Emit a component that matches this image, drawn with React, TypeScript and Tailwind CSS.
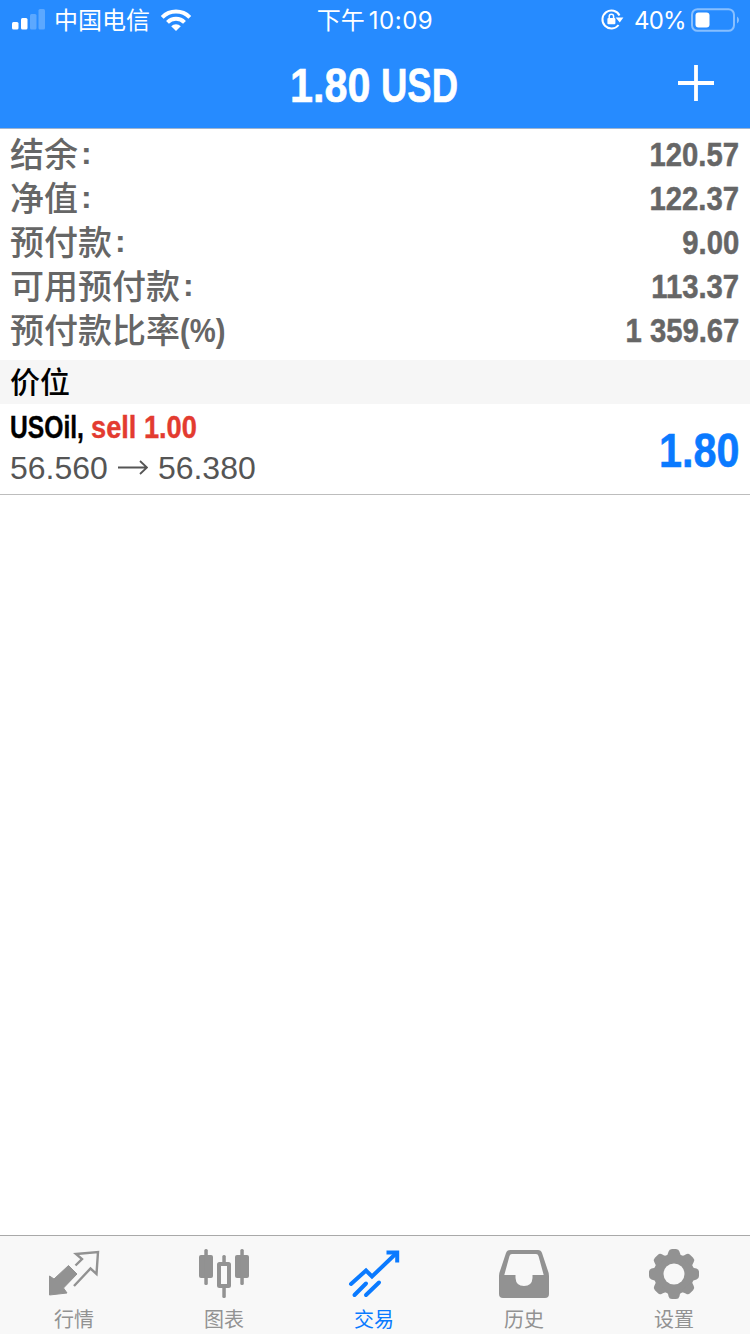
import React from 'react';

interface SummaryRow {
  label: string;
  suffix: string;
  value: string;
}

const summary: SummaryRow[] = [
  { label: "结余", suffix: ":", value: "120.57" },
  { label: "净值", suffix: ":", value: "122.37" },
  { label: "预付款", suffix: ":", value: "9.00" },
  { label: "可用预付款", suffix: ":", value: "113.37" },
  { label: "预付款比率", suffix: "(%)", value: "1 359.67" }
];

const QuotesIcon = () => (
  <svg width="52" height="52" viewBox="0 0 52 52">
    <path d="M1.5 27L6 30L20.5 16.5L29 25L15.5 39L19 44L1.5 46Z" fill="#929292" stroke="#929292" strokeWidth="1" strokeLinejoin="round" />
    <path d="M27.5 16.5L34 10L28 5L50 3L48.5 25L42.5 19.5L26 37" fill="none" stroke="#929292" strokeWidth="2.4" />
  </svg>
);

const ChartIcon = () => (
  <svg width="52" height="52" viewBox="0 0 52 52" fill="#929292">
    <rect x="1" y="6" width="14" height="23" rx="2" />
    <rect x="6.3" y="0" width="3.5" height="36" rx="1.5" />
    <rect x="37" y="6" width="14" height="23" rx="2" />
    <rect x="42.3" y="0" width="3.5" height="36" rx="1.5" />
    <rect x="24.3" y="6" width="3.5" height="9" rx="1.5" />
    <rect x="24.3" y="37" width="3.5" height="12" rx="1.5" />
    <rect x="21" y="15" width="10" height="22" rx="0.5" fill="none" stroke="#929292" strokeWidth="4" />
  </svg>
);

const TradeIcon = () => (
  <svg width="52" height="52" viewBox="0 0 52 52" fill="none" stroke="#0a7aff" strokeWidth="4">
    <path d="M3 35L18 21.5L24 27.5L48 4.5" strokeLinecap="round" />
    <path d="M38.5 3.4H49.2V13.5" />
    <path d="M6.5 46L18 34.5M18 46L31 33.5" strokeLinecap="round" />
  </svg>
);

const HistoryIcon = () => (
  <svg width="52" height="52" viewBox="0 0 52 52">
    <path fillRule="evenodd" fill="#929292" d="M12 1H40Q43 1 44 4L50 22Q51 24 51 27V45Q51 49 47 49H5Q1 49 1 45V27Q1 24 2 22L8 4Q9 1 12 1ZM14 5Q12 5 11.5 7L6.3 26H17.5V29Q18 37 26 37Q34 37 34.5 29V26H45.7L40.5 7Q40 5 38 5Z" />
  </svg>
);

const SettingsIcon = () => (
  <svg width="52" height="52" viewBox="0 0 52 52">
    <g fill="#929292">
      <circle cx="26" cy="25" r="20" />
      {[0, 45, 90, 135, 180, 225, 270, 315].map((angle) => (
        <path key={angle} d="M17.5 7.5Q20 6 20.6 2.5Q21.2 0 24 0H28Q30.8 0 31.4 2.5Q32 6 34.5 7.5Z" transform={`rotate(${angle} 26 25)`} />
      ))}
    </g>
    <circle cx="26" cy="25" r="10.5" fill="#f8f8f8" />
  </svg>
);

const tabs = [
  { label: "行情", icon: <QuotesIcon />, active: false },
  { label: "图表", icon: <ChartIcon />, active: false },
  { label: "交易", icon: <TradeIcon />, active: true },
  { label: "历史", icon: <HistoryIcon />, active: false },
  { label: "设置", icon: <SettingsIcon />, active: false }
];

const StatusBar = () => (
  <div className="grid h-10 grid-cols-[1fr_auto_1fr] items-center text-white font-['Inter','Noto_Sans_CJK_SC',sans-serif] text-2xl">
    <div className="flex h-10 items-center pl-3">
      <svg width="34" height="22" viewBox="0 0 34 22" fill="#fff">
        <rect x="0" y="13" width="6.5" height="7.5" rx="1.5" />
        <rect x="9" y="9" width="6.5" height="11.5" rx="1.5" />
        <rect x="18" y="5" width="6.5" height="15.5" rx="1.5" opacity="0.25" />
        <rect x="26.5" y="0" width="6.5" height="20.5" rx="1.5" opacity="0.25" />
      </svg>
      <span className="ml-2 pt-0.5">中国电信</span>
      <svg className="ml-2.5" width="32" height="24" viewBox="0 0 32 24" fill="none" stroke="#fff" strokeWidth="4">
        <path d="M2.2 9.3A19.5 19.5 0 0 1 29.8 9.3" />
        <path d="M7.5 14.3A12 12 0 0 1 24.5 14.3" />
        <path d="M16 23L11.2 18.3A6.8 6.8 0 0 1 20.8 18.3Z" fill="#fff" stroke="none" />
      </svg>
    </div>
    <span className="pt-px">下午<span className="ml-1 tracking-[0.5px]">10:09</span></span>
    <div className="flex h-10 items-center justify-end pr-2.5">
      <svg className="mb-0.5" width="24" height="24" viewBox="0 0 24 24" fill="none" stroke="#fff" strokeWidth="2">
        <path d="M18.6 18A9 9 0 1 1 19.5 8.5" />
        <path d="M15.6 10.5H23.4L19.8 15.5Z" fill="#fff" stroke="none" />
        <rect x="7.4" y="11" width="8" height="6.3" rx="1" fill="#fff" stroke="none" />
        <path d="M9.2 11.5V9.5A2.2 2.2 0 0 1 13.6 9.5V11.5" strokeWidth="1.5" />
      </svg>
      <span className="ml-2.5 pt-px tracking-[-0.7px]">40%</span>
      <svg className="ml-[5px]" width="49" height="24" viewBox="0 0 49 24">
        <rect x="1" y="1.2" width="42" height="21.6" rx="5.5" fill="none" stroke="#fff" strokeOpacity="0.45" strokeWidth="2" />
        <rect x="4.5" y="4.5" width="14" height="15" rx="3" fill="#fff" />
        <path d="M46 8.5Q48 9.5 48 12Q48 14.5 46 15.5Z" fill="#fff" fillOpacity="0.45" />
      </svg>
    </div>
  </div>
);

export default function App() {
  return (
    <div className="flex h-[1334px] w-[750px] flex-col overflow-hidden bg-white font-['Liberation_Sans','Noto_Sans_CJK_SC',sans-serif]">
      <header className="h-[129px] border-b border-[#9fb4cf] bg-[#268bff]">
        <StatusBar />
        <div className="grid h-[88px] grid-cols-[1fr_auto_1fr] items-center text-white">
          <span />
          <h1 className="flex whitespace-nowrap pt-1 text-5xl font-bold leading-[84px] [-webkit-text-stroke:0.6px]">
            <span className="w-[91px] origin-left scale-x-[0.86]">1.80</span>
            <span className="w-[79px] origin-left scale-x-[0.76]">USD</span>
          </h1>
          <svg className="mr-[35px] justify-self-end" width="38" height="38" viewBox="0 0 38 38" stroke="#fff" strokeWidth="3.8">
            <path d="M1 18H37M19 0V36" />
          </svg>
        </div>
      </header>

      <section className="px-2.5 pt-[3px] pb-2 text-[34px] text-[#666666]">
        {summary.map((row) => (
          <div key={row.label} className="flex h-11 items-center justify-between leading-[44px]">
            <span className="flex h-11">
              <span className="-mt-px font-['Noto_Sans_CJK_SC',sans-serif] font-medium">{row.label}</span>
              {row.suffix === ":" ? (
                <span className="-mt-px ml-[3px] text-[32px] font-bold leading-[44px]">:</span>
              ) : (
                <span className="origin-left scale-x-[0.86] font-bold">{row.suffix}</span>
              )}
            </span>
            <span className="mr-px origin-right scale-x-[0.86] font-bold [-webkit-text-stroke:0.5px]">{row.value}</span>
          </div>
        ))}
      </section>

      <h2 className="h-11 bg-[#f6f6f6] px-2.5 pt-px text-3xl font-medium leading-[44px] text-black">价位</h2>

      <section className="flex h-[91px] items-center justify-between border-b border-[#bdbdbd] px-2.5">
        <div className="-mt-1">
          <div className="flex h-[42px] whitespace-nowrap text-[32px] font-bold leading-[42px] text-black [-webkit-text-stroke:0.4px]">
            <span className="w-[81px] origin-left scale-x-[0.77]">USOil,</span>
            <span className="origin-left scale-x-[0.85] text-[#e33b30]">sell 1.00</span>
          </div>
          <div className="flex h-10 items-center text-[32px] leading-10 text-[#555555]">
            <span>56.560</span>
            <svg className="mx-2.5" width="30" height="16" viewBox="0 0 30 16" fill="none" stroke="#555555" strokeWidth="1.8">
              <path d="M0 7.5H29M22 1L29 7.5L22 14" />
            </svg>
            <span>56.380</span>
          </div>
        </div>
        <span className="mr-px mt-1 origin-right scale-x-[0.86] text-5xl font-bold text-[#0a7aff] [-webkit-text-stroke:0.6px]">1.80</span>
      </section>

      <main className="flex-1" />

      <nav className="grid h-[99px] grid-cols-5 border-t border-[#a9a9a9] bg-[#f8f8f8]">
        {tabs.map((tab) => (
          <button
            key={tab.label}
            className={tab.active ? "flex flex-col items-center pt-[13px] pr-0.5 text-[#0a7aff]" : "flex flex-col items-center pt-[13px] pr-0.5 text-[#929292]"}
          >
            {tab.icon}
            <span className="mt-[5px] text-xl leading-7">{tab.label}</span>
          </button>
        ))}
      </nav>
    </div>
  );
}
